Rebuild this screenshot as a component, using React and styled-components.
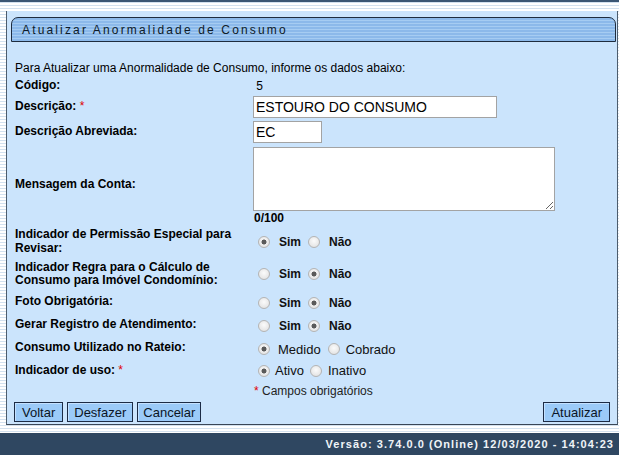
import React from "react";
import styled, { createGlobalStyle } from "styled-components";

const Global = createGlobalStyle`
  html, body { margin: 0; padding: 0; }
  body {
    font-family: "Liberation Sans", Arial, sans-serif;
    background: repeating-linear-gradient(to bottom, #ffffff 0 2px, #d3e1ef 2px 3px);
    color: #000;
  }
  #root { width: 619px; height: 455px; overflow: hidden; }
`;

const Page = styled.div`
  display: flex;
  flex-direction: column;
  width: 619px;
  height: 455px;
`;

const TopRule = styled.div`
  height: 2px;
  background: #3b5674;
`;

const Frame = styled.div`
  padding: 9px 0 0 6px;
  flex: 1;
`;

const Panel = styled.div`
  width: 605px;
  background: #cbe4fc;
  border-left: 1px solid #4d5c6c;
  border-right: 1px solid #4d5c6c;
  border-bottom: 1px solid #3a4656;
  padding: 6px 1px 2px 4px;
  box-sizing: content-box;
`;

const TabHeader = styled.div`
  height: 23px;
  border: 1px solid #1e2c3e;
  border-radius: 7px 7px 0 0;
  background: repeating-linear-gradient(to bottom, #8cb9ea 0 2px, #a6ccf2 2px 3px);
  display: flex;
  align-items: center;
  padding-left: 10px;
`;

const Title = styled.span`
  font-size: 12px;
  letter-spacing: 2.15px;
  color: #0d1a28;
`;

const Form = styled.div`
  display: flex;
  flex-direction: column;
  padding: 17px 4px 0 4px;
`;

const Intro = styled.div`
  font-size: 12px;
  height: 18px;
  line-height: 18px;
`;

const Row = styled.div`
  display: grid;
  grid-template-columns: 238px 1fr;
  align-items: center;
  height: ${(p) => p.$h}px;
`;

const Label = styled.div`
  font-size: 12px;
  font-weight: bold;
  line-height: 13.5px;
`;

const Req = styled.span`
  color: #e00000;
  font-weight: normal;
`;

const Value = styled.div`
  font-size: 12px;
  display: flex;
  align-items: center;
  padding-top: ${(p) => p.$pt || 0}px;
`;

const TextInput = styled.input`
  box-sizing: border-box;
  width: ${(p) => p.$w}px;
  height: 22px;
  border: 1px solid #a3a3a3;
  background: #fff;
  font-family: "Liberation Sans", Arial, sans-serif;
  font-size: 14px;
  padding: 0 2px;
  margin: 0;
  color: #000;
  outline: none;
`;

const MessageCell = styled.div`
  display: flex;
  flex-direction: column;
  padding-top: 2px;
`;

const TextArea = styled.textarea`
  box-sizing: border-box;
  width: 302px;
  height: 64px;
  border: 1px solid #a3a3a3;
  background: #fff;
  margin: 0;
  padding: 2px;
  outline: none;
`;

const Counter = styled.div`
  font-size: 12px;
  font-weight: bold;
  line-height: 14px;
  padding-left: 1px;
`;

const Radio = styled.input.attrs({ type: "radio" })`
  appearance: none;
  -webkit-appearance: none;
  width: 12px;
  height: 12px;
  margin: 0 0 0 ${(p) => p.$ml || 0}px;
  border-radius: 50%;
  border: 1px solid #b4b4b4;
  box-sizing: border-box;
  background: radial-gradient(circle at 50% 40%, #fbfbfb 0, #e6e6e6 70%, #d6d6d6 100%);
  flex: none;
  &:checked {
    background:
      radial-gradient(circle, #5a5a5a 0 2.2px, transparent 2.8px),
      radial-gradient(circle at 50% 40%, #fbfbfb 0, #e6e6e6 70%, #d6d6d6 100%);
  }
`;

const Choice = styled.span`
  margin-left: ${(p) => p.$ml}px;
  font-size: ${(p) => (p.$bold ? 12 : 13)}px;
  font-weight: ${(p) => (p.$bold ? "bold" : "normal")};
  color: #111;
`;

const Note = styled.div`
  font-size: 12px;
  color: #222;
  padding-left: 1px;
`;

const ButtonBar = styled.div`
  display: flex;
  align-items: center;
  gap: 4px;
  padding: 3px 6px 0 3px;
  height: 20px;
`;

const Spacer = styled.div`
  flex: 1;
`;

const Button = styled.button`
  height: 20px;
  padding: 0 ${(p) => p.$px || 6}px;
  margin: 0;
  font-family: "Liberation Sans", Arial, sans-serif;
  font-size: 13px;
  color: #0a1424;
  background: #9bcaf8;
  border: 1px solid #1c2b45;
  box-shadow: inset 1px 1px 0 #c4e1ff;
  cursor: pointer;
`;

const Gap = styled.div`
  height: 8px;
`;

const Footer = styled.div`
  height: 22px;
  background: #2f4761;
  display: flex;
  align-items: center;
  justify-content: flex-end;
  padding-right: 5px;
  color: #f0f4f8;
  font-size: 11px;
  font-weight: bold;
  letter-spacing: 1.05px;
`;

function YesNo({ name, yes, pt }) {
  return (
    <Value $pt={pt}>
      <Radio name={name} $ml={5} defaultChecked={yes} />
      <Choice $bold $ml={9}>Sim</Choice>
      <Radio name={name} $ml={7} defaultChecked={!yes} />
      <Choice $bold $ml={9}>Não</Choice>
    </Value>
  );
}

export default function App() {
  return (
    <>
      <Global />
      <Page>
        <TopRule />
        <Frame>
          <Panel>
            <TabHeader>
              <Title>Atualizar Anormalidade de Consumo</Title>
            </TabHeader>
            <Form>
              <Intro>Para Atualizar uma Anormalidade de Consumo, informe os dados abaixo:</Intro>
              <Row $h={18}>
                <Label>Código:</Label>
                <Value>&nbsp;5</Value>
              </Row>
              <Row $h={24}>
                <Label>
                  Descrição: <Req>*</Req>
                </Label>
                <Value>
                  <TextInput $w={244} defaultValue="ESTOURO DO CONSUMO" />
                </Value>
              </Row>
              <Row $h={26}>
                <Label>Descrição Abreviada:</Label>
                <Value>
                  <TextInput $w={69} defaultValue="EC" />
                </Value>
              </Row>
              <Row $h={80}>
                <Label>Mensagem da Conta:</Label>
                <MessageCell>
                  <TextArea />
                  <Counter>0/100</Counter>
                </MessageCell>
              </Row>
              <Row $h={33}>
                <Label>
                  Indicador de Permissão Especial para
                  <br />
                  Revisar:
                </Label>
                <YesNo name="perm" yes />
              </Row>
              <Row $h={32}>
                <Label>
                  Indicador Regra para o Cálculo de
                  <br />
                  Consumo para Imóvel Condomínio:
                </Label>
                <YesNo name="regra" yes={false} />
              </Row>
              <Row $h={23}>
                <Label>Foto Obrigatória:</Label>
                <YesNo name="foto" yes={false} pt={3} />
              </Row>
              <Row $h={23}>
                <Label>Gerar Registro de Atendimento:</Label>
                <YesNo name="ra" yes={false} pt={2} />
              </Row>
              <Row $h={23}>
                <Label>Consumo Utilizado no Rateio:</Label>
                <Value $pt={3}>
                  <Radio name="rateio" $ml={5} defaultChecked />
                  <Choice $ml={8}>Medido</Choice>
                  <Radio name="rateio" $ml={7} />
                  <Choice $ml={6}>Cobrado</Choice>
                </Value>
              </Row>
              <Row $h={23}>
                <Label>
                  Indicador de uso: <Req>*</Req>
                </Label>
                <Value>
                  <Radio name="uso" $ml={5} defaultChecked />
                  <Choice $ml={5}>Ativo</Choice>
                  <Radio name="uso" $ml={6} />
                  <Choice $ml={6}>Inativo</Choice>
                </Value>
              </Row>
              <Row $h={17}>
                <span />
                <Note>
                  <Req>*</Req> Campos obrigatórios
                </Note>
              </Row>
            </Form>
            <ButtonBar>
              <Button $px={7}>Voltar</Button>
              <Button $px={6}>Desfazer</Button>
              <Button $px={5}>Cancelar</Button>
              <Spacer />
              <Button $px={7}>Atualizar</Button>
            </ButtonBar>
          </Panel>
        </Frame>
        <Gap />
        <Footer>Versão: 3.74.0.0 (Online) 12/03/2020 - 14:04:23</Footer>
      </Page>
    </>
  );
}
